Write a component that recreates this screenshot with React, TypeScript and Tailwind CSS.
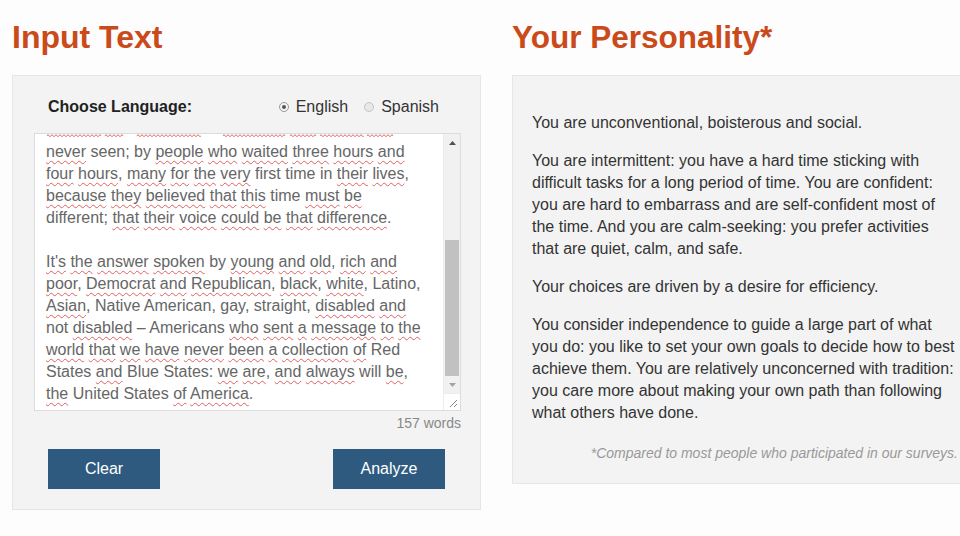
import { FC } from "react"

const essay: string[] = [
    "{never} seen; by {people} {who} {waited} {three} {hours} {and}",
    "{four} {hours}, {many} {for} {the} {very} first time in {their} {lives},",
    "{because} {they} {believed} {that} {this} time {must} {be}",
    "different; {that} {their} {voice} {could} {be} {that} {difference}.",
    "",
    "{It's} {the} {answer} {spoken} by {young} {and} {old}, {rich} {and}",
    "{poor}, {Democrat} {and} {Republican}, {black}, {white}, Latino,",
    "{Asian}, Native American, gay, straight, {disabled} {and}",
    "not {disabled} – Americans {who} {sent} {a} {message} {to} {the}",
    "{world} {that} {we} {have} {never} {been} {a} {collection} {of} Red",
    "States {and} Blue States: {we} {are}, {and} {always} will {be},",
    "{the} United States {of} {America}.",
]

// underline marks of the line scrolled out above the visible text
const topMarks: [number, number][] = [[1, 54], [59, 77], [91, 154], [177, 239], [244, 269], [274, 317], [321, 347]]

const personality: string[][] = [
    ["You are unconventional, boisterous and social."],
    [
        "You are intermittent: you have a hard time sticking with",
        "difficult tasks for a long period of time. You are confident:",
        "you are hard to embarrass and are self-confident most of",
        "the time. And you are calm-seeking: you prefer activities",
        "that are quiet, calm, and safe.",
    ],
    ["Your choices are driven by a desire for efficiency."],
    [
        "You consider independence to guide a large part of what",
        "you do: you like to set your own goals to decide how to best",
        "achieve them. You are relatively unconcerned with tradition:",
        "you care more about making your own path than following",
        "what others have done.",
    ],
]

const wave = (x1: number, x2: number) => {
    let d = `M${x1} 2`
    for (let x = x1; x < x2; x += 2) d += ` L${x + 1} ${x % 4 === x1 % 4 ? 0.5 : 2.5} L${x + 2} 2`
    return d
}

const EssayLine: FC<{ text: string }> = ({ text }) => {
    if (!text) return <div className="h-[22px]" />
    const parts = text.split(/(\{[^}]+\})/).filter(p => p !== "")
    return (
        <div className="h-[22px] whitespace-nowrap">
            {parts.map((p, i) =>
                p.startsWith("{") ? (
                    <span key={i} className="underline decoration-wavy decoration-[#e06060] decoration-1 underline-offset-[3px]">
                        {p.slice(1, -1)}
                    </span>
                ) : (
                    <span key={i}>{p}</span>
                )
            )}
        </div>
    )
}

const Radio: FC<{ checked?: boolean; label: string }> = ({ checked, label }) => (
    <label className="flex items-center gap-[7px]">
        <span
            className={
                checked
                    ? "w-[10px] h-[10px] rounded-full border border-[#9a9a9a] bg-[#f4f4f4] flex items-center justify-center"
                    : "w-[10px] h-[10px] rounded-full border border-[#c4c4c4] bg-[#e8e8e8]"
            }
        >
            {checked && <span className="w-[4px] h-[4px] rounded-full bg-[#555]" />}
        </span>
        <span>{label}</span>
    </label>
)

const ScrollBar: FC = () => (
    <div className="w-[17px] flex flex-col">
        <div className="flex-1 flex flex-col bg-[#f1f1f1] border-l border-[#ececec]">
            <div className="h-[17px] flex items-center justify-center">
                <svg width="7" height="4" viewBox="0 0 7 4"><path d="M3.5 0L7 4H0z" fill="#505050" /></svg>
            </div>
            <div className="flex-1 flex flex-col pt-[89px]">
                <div className="h-[136px] mx-[1px] bg-[#c1c1c1]" />
            </div>
            <div className="h-[17px] flex items-center justify-center">
                <svg width="7" height="4" viewBox="0 0 7 4"><path d="M0 0H7L3.5 4z" fill="#a3a3a3" /></svg>
            </div>
        </div>
        <div className="h-[17px] bg-white border-l border-t border-[#ececec] flex items-end justify-end p-[2px]">
            <svg width="9" height="9" viewBox="0 0 9 9">
                <path d="M1 8L8 1M5 8L8 5" stroke="#8a8a8a" strokeWidth="1" />
            </svg>
        </div>
    </div>
)

export default function App() {
    return (
        <div className="w-[960px] h-[536px] overflow-hidden bg-[#fdfdfd] font-['Liberation_Sans',Arial,sans-serif]">
            <div className="flex gap-[31px] pl-[12px]">
                <div className="w-[469px] shrink-0">
                    <h1 className="h-[75px] pt-[21px] text-[32px] leading-[32px] font-bold text-[#cb4a1a]">Input Text</h1>
                    <div className="h-[435px] bg-[#f3f3f3] border border-[#e6e6e6] pt-[20px] pl-[21px] pr-[19px]">
                        <div className="h-[22px] flex items-center justify-between pl-[14px] pr-[22px] text-[16px]">
                            <span className="font-bold text-[#222]">Choose Language:</span>
                            <div className="flex items-center gap-[16px] text-[#333]">
                                <Radio checked label="English" />
                                <Radio label="Spanish" />
                            </div>
                        </div>
                        <div className="mt-[15px] h-[278px] bg-white border border-[#dcdcdc] flex">
                            <div className="flex-1 overflow-hidden pl-[11px] text-[16px] leading-[22px] text-[#666]">
                                <svg width="360" height="7" viewBox="0 0 360 7" className="block">
                                    {topMarks.map(([a, b], i) => (
                                        <path key={i} d={wave(a, b)} fill="none" stroke="#e07070" strokeWidth="0.9" />
                                    ))}
                                </svg>
                                {essay.map((l, i) => <EssayLine key={i} text={l} />)}
                            </div>
                            <ScrollBar />
                        </div>
                        <div className="h-[24px] text-right text-[14px] leading-[24px] text-[#888]">157 words</div>
                        <div className="mt-[14px] flex justify-between pl-[14px] pr-[16px]">
                            <button className="w-[112px] h-[40px] bg-[#2e5a80] text-white text-[16px]">Clear</button>
                            <button className="w-[112px] h-[40px] bg-[#2e5a80] text-white text-[16px]">Analyze</button>
                        </div>
                    </div>
                </div>
                <div className="w-[480px] shrink-0">
                    <h1 className="h-[75px] pt-[21px] text-[31.5px] leading-[32px] font-bold text-[#cb4a1a] whitespace-nowrap">Your Personality*</h1>
                    <div className="w-[480px] bg-[#f3f3f3] border border-[#e6e6e6] pt-[36px] pb-[20px] pl-[19px] pr-[24px]">
                        <div className="flex flex-col gap-[16px] text-[16px] leading-[22px] text-[#333]">
                            {personality.map((para, i) => (
                                <p key={i}>
                                    {para.map((line, j) => (
                                        <span key={j} className="block whitespace-nowrap">{line}</span>
                                    ))}
                                </p>
                            ))}
                        </div>
                        <p className="mt-[19px] text-[14px] leading-[20px] italic text-[#999] text-right w-[426px] whitespace-nowrap">
                            *Compared to most people who participated in our surveys.
                        </p>
                    </div>
                </div>
            </div>
        </div>
    )
}
